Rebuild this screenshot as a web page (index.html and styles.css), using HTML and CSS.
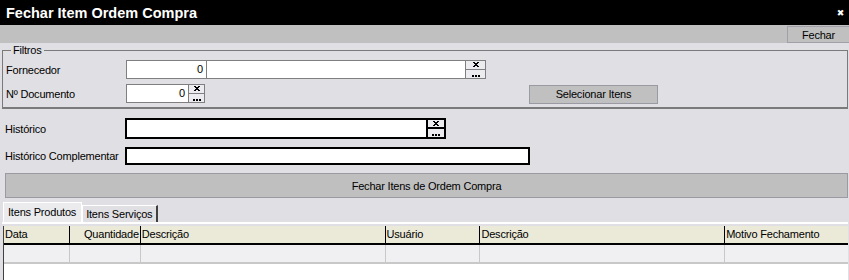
FILE: index.html
```html
<!DOCTYPE html>
<html lang="pt-BR">
  <head>
    <meta charset="UTF-8" />
    <title>Fechar Item Ordem Compra</title>
    <link rel="stylesheet" href="styles.css">
  </head>
  <body>
    <!-- Title bar -->
    <div class="titlebar">
      <span class="title">Fechar Item Ordem Compra</span>
      <span class="close">&#x2716;</span>
    </div>

    <!-- Toolbar -->
    <div class="toolbar">
      <button class="tool-btn">Fechar</button>
    </div>

    <div class="content">
      <fieldset class="filtros">
        <legend>Filtros</legend>
        <div class="row row-first">
          <label class="lbl">Fornecedor</label>
          <div class="field num w80">0</div>
          <div class="field w259"></div>
          <div class="pick w20">
            <span class="pick-x"><svg width="6" height="5" viewBox="0 0 6 5"><path d="M0 0h2v1h2v-1h2v1h-1v1h-1v1h1v1h1v1h-2v-1h-2v1h-2v-1h1v-1h1v-1h-1v-1h-1z" fill="#000"/></svg></span>
            <span class="pick-dots"><svg width="8" height="2" viewBox="0 0 8 2"><path d="M0 0h2v2h-2zM3 0h2v2h-2zM6 0h2v2h-2z" fill="#000"/></svg></span>
          </div>
        </div>
        <div class="row row-second">
          <label class="lbl">Nº Documento</label>
          <div class="field num w63">0</div>
          <div class="pick w16">
            <span class="pick-x"><svg width="6" height="5" viewBox="0 0 6 5"><path d="M0 0h2v1h2v-1h2v1h-1v1h-1v1h1v1h1v1h-2v-1h-2v1h-2v-1h1v-1h1v-1h-1v-1h-1z" fill="#000"/></svg></span>
            <span class="pick-dots"><svg width="8" height="2" viewBox="0 0 8 2"><path d="M0 0h2v2h-2zM3 0h2v2h-2zM6 0h2v2h-2z" fill="#000"/></svg></span>
          </div>
          <button class="btn-sel">Selecionar Itens</button>
        </div>
      </fieldset>

      <div class="row row-hist">
        <label class="lbl">Histórico</label>
        <div class="field dark w303"></div>
        <div class="pick dark-pick w18">
          <span class="pick-x"><svg width="6" height="5" viewBox="0 0 6 5"><path d="M0 0h2v1h2v-1h2v1h-1v1h-1v1h1v1h1v1h-2v-1h-2v1h-2v-1h1v-1h1v-1h-1v-1h-1z" fill="#000"/></svg></span>
          <span class="pick-dots"><svg width="8" height="2" viewBox="0 0 8 2"><path d="M0 0h2v2h-2zM3 0h2v2h-2zM6 0h2v2h-2z" fill="#000"/></svg></span>
        </div>
      </div>
      <div class="row row-comp">
        <label class="lbl">Histórico Complementar</label>
        <div class="field dark w405 h18"></div>
      </div>

      <button class="btn-big">Fechar Itens de Ordem Compra</button>

      <div class="tabs">
        <div class="tab active">Itens Produtos</div>
        <div class="tab">Itens Serviços</div>
      </div>

      <div class="grid">
        <div class="grid-head">
          <div class="col c1">Data</div>
          <div class="col c2 right">Quantidade</div>
          <div class="col c3">Descrição</div>
          <div class="col c4">Usuário</div>
          <div class="col c5">Descrição</div>
          <div class="col c6">Motivo Fechamento</div>
        </div>
        <div class="grid-row">
          <div class="col c1"></div>
          <div class="col c2"></div>
          <div class="col c3"></div>
          <div class="col c4"></div>
          <div class="col c5"></div>
          <div class="col c6"></div>
        </div>
      </div>
    </div>
  </body>
</html>
```

FILE: styles.css
```css
/* General */
body {
  margin: 0;
  background: #e0dfe3;
  font-family: "Liberation Sans", Arial, sans-serif;
  font-size: 11px;
  letter-spacing: -0.2px;
  color: #000;
  overflow: hidden;
}

button {
  font-family: inherit;
  font-size: 11px;
  letter-spacing: -0.2px;
  color: #000;
  padding: 0;
  cursor: pointer;
}

/* Title bar */
.titlebar {
  height: 25px;
  background: #000;
  display: flex;
  align-items: center;
  justify-content: space-between;
  padding: 0 5px 0 6px;
}

.title {
  color: #fff;
  font-weight: bold;
  font-size: 14.5px;
  letter-spacing: 0;
}

.close {
  color: #fff;
  font-family: "DejaVu Sans", sans-serif;
  font-size: 9px;
  font-weight: bold;
}

/* Toolbar */
.toolbar {
  height: 18px;
  background: #c0c0c0;
  display: flex;
  justify-content: flex-end;
}

.tool-btn {
  width: 62px;
  height: 17px;
  margin-top: 1px;
  background: #c0c0c0;
  border: 1px solid #a0a0a8;
  border-right: none;
}

/* Content */
.content {
  padding: 0 1px 0 2px;
}

.filtros {
  margin: 0;
  padding: 0 0 4px 3px;
  border: 1px solid #7a7a7a;
  border-bottom: 2px solid #7a7a7a;
}

.filtros legend {
  padding: 0 2px;
  margin-left: 5px;
  line-height: 14px;
}

.row {
  display: flex;
  align-items: center;
  height: 19px;
}

.row-first {
  margin-top: 3px;
}

.row-second {
  margin-top: 5px;
}

.row-hist {
  margin-top: 9px;
  padding-left: 3px;
  height: 21px;
}

.row-comp {
  margin-top: 8px;
  padding-left: 3px;
  height: 18px;
}

.lbl {
  width: 120px;
  flex-shrink: 0;
  white-space: nowrap;
}

/* Inputs */
.field {
  box-sizing: border-box;
  height: 19px;
  background: #fff;
  border: 1px solid #7f7f7f;
  line-height: 17px;
  padding-right: 3px;
}

.field + .field {
  border-left: none;
}

.num {
  text-align: right;
}

.dark {
  border: 2px solid #000;
  height: 21px;
}

.h18 {
  height: 18px;
}

.w80 { width: 81px; }
.w259 { width: 259px; }
.w63 { width: 63px; }
.w303 { width: 303px; }
.w405 { width: 405px; }
.w20 { width: 20px; }
.w16 { width: 16px; }
.w18 { width: 18px; }

/* Picker buttons (clear / search) */
.pick {
  box-sizing: border-box;
  height: 19px;
  display: flex;
  flex-direction: column;
  border: 1px solid #7f7f7f;
  border-left: none;
  background: #ececf0;
}

.pick span {
  flex: 1;
  display: flex;
  justify-content: center;
}

.pick svg {
  display: block;
}

.pick-x {
  align-items: center;
  border-bottom: 1px solid #7f7f7f;
}

.pick-dots {
  align-items: flex-end;
  padding-bottom: 1px;
}

.dark-pick {
  height: 21px;
  border: 2px solid #000;
  border-left: none;
}

.dark-pick .pick-x {
  border-bottom: 2px solid #000;
}

.btn-sel {
  margin-left: 324px;
  width: 129px;
  height: 19px;
  margin-top: 1px;
  background: #c0c0c0;
  border: 1px solid #9a9aa2;
}

/* Big action button */
.btn-big {
  display: block;
  margin: 8px 0 0 3px;
  width: 843px;
  height: 25px;
  background: #bfbfbf;
  border: 1px solid #9a9aa2;
}

/* Tabs */
.tabs {
  display: flex;
  align-items: flex-end;
  height: 19px;
  margin-top: 5px;
  padding-left: 1px;
  border-bottom: 2px solid #fff;
}

.tab {
  height: 16px;
  line-height: 16px;
  padding: 0 4px 0 3px;
  white-space: nowrap;
  border-left: 1px solid #fff;
  border-top: 1px solid #fff;
  border-right: 2px solid #404040;
}

.tab.active {
  height: 19px;
  line-height: 18px;
  background: #ebebee;
  padding: 0 5px 0 4px;
  border-right: 1px solid #fff;
}

/* Grid */
.grid {
  margin: 2px 0 0 1px;
  height: 60px;
  background: #fff;
  border-left: 1px solid #404040;
}

.grid-head,
.grid-row {
  display: flex;
  height: 17px;
}

.grid-head {
  background: #ebe9d8;
  border-bottom: 2px solid #000;
}

.grid-row {
  background: #f0f0f3;
  border-bottom: 2px solid #c8c8c8;
}

.col {
  box-sizing: border-box;
  padding: 0 1px;
  line-height: 17px;
  white-space: nowrap;
  overflow: hidden;
}

.grid-head .col + .col {
  border-left: 1px solid #000;
}

.grid-row .col + .col {
  border-left: 1px solid #c8c8c8;
}

.right {
  text-align: right;
}

.c1 { width: 65px; }
.c2 { width: 71px; }
.c3 { width: 245px; }
.c4 { width: 95px; }
.c5 { width: 245px; }
.c6 { width: 124px; }
```
